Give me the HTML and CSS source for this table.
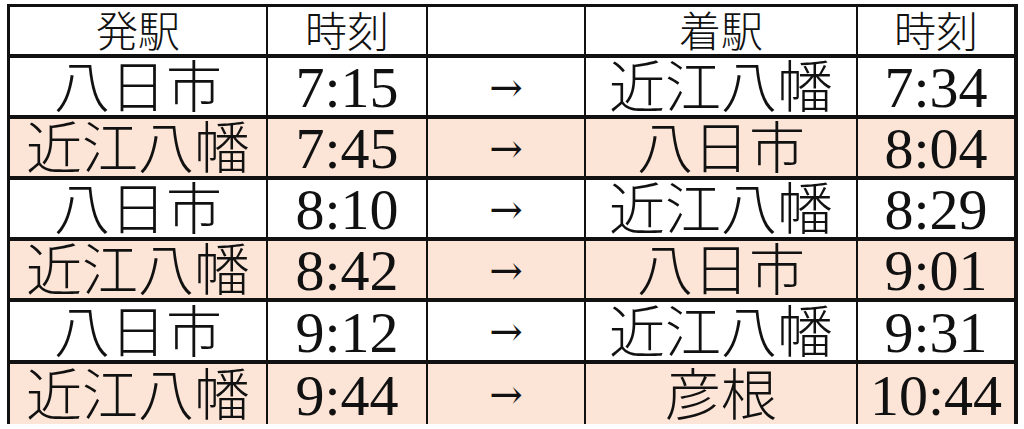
FILE: index.html
```html
<!DOCTYPE html>
<html lang="ja">
<head>
<meta charset="utf-8">
<title>時刻表</title>
<link rel="stylesheet" href="styles.css">
</head>
<body>
<div class="timetable">
  <div class="cell head">発駅</div>
  <div class="cell head">時刻</div>
  <div class="cell head"></div>
  <div class="cell head">着駅</div>
  <div class="cell head">時刻</div>

  <div class="cell st">八日市</div>
  <div class="cell tm">7:15</div>
  <div class="cell ar">→</div>
  <div class="cell st">近江八幡</div>
  <div class="cell tm">7:34</div>

  <div class="cell st alt">近江八幡</div>
  <div class="cell tm alt">7:45</div>
  <div class="cell ar alt">→</div>
  <div class="cell st alt">八日市</div>
  <div class="cell tm alt">8:04</div>

  <div class="cell st">八日市</div>
  <div class="cell tm">8:10</div>
  <div class="cell ar">→</div>
  <div class="cell st">近江八幡</div>
  <div class="cell tm">8:29</div>

  <div class="cell st alt">近江八幡</div>
  <div class="cell tm alt">8:42</div>
  <div class="cell ar alt">→</div>
  <div class="cell st alt">八日市</div>
  <div class="cell tm alt">9:01</div>

  <div class="cell st">八日市</div>
  <div class="cell tm">9:12</div>
  <div class="cell ar">→</div>
  <div class="cell st">近江八幡</div>
  <div class="cell tm">9:31</div>

  <div class="cell st alt">近江八幡</div>
  <div class="cell tm alt">9:44</div>
  <div class="cell ar alt">→</div>
  <div class="cell st alt">彦根</div>
  <div class="cell tm alt">10:44</div>
</div>
</body>
</html>
```

FILE: styles.css
```css
html, body {
  margin: 0;
  padding: 0;
  background: #ffffff;
}

body {
  font-family: "Liberation Serif", "Noto Sans CJK JP", serif;
  color: #111111;
}

.timetable {
  margin: 4px 0 0 7px;
  width: 1011px;
  box-sizing: border-box;
  display: grid;
  grid-template-columns: 256px 158px 156px 270px 156px;
  grid-template-rows: 47px 57px 57px 57px 57px 58px 60px;
  column-gap: 2px;
  row-gap: 4px;
  padding: 3px 4px 0 3px;
  background: #111111;
}

.cell {
  background: #ffffff;
  display: flex;
  align-items: center;
  justify-content: center;
  line-height: 1;
  white-space: nowrap;
}

.cell.alt {
  background: #fce4d6;
}

.head {
  font-family: "Noto Sans CJK JP", sans-serif;
  font-weight: 300;
  font-size: 42px;
  padding-bottom: 3px;
}

.st {
  font-family: "Noto Sans CJK JP", sans-serif;
  font-weight: 300;
  font-size: 56px;
  padding-bottom: 7px;
}

.tm {
  font-size: 58px;
  padding-top: 3px;
}

.ar {
  font-family: "DejaVu Serif", serif;
  font-size: 40px;
  font-weight: 300;
}
```
